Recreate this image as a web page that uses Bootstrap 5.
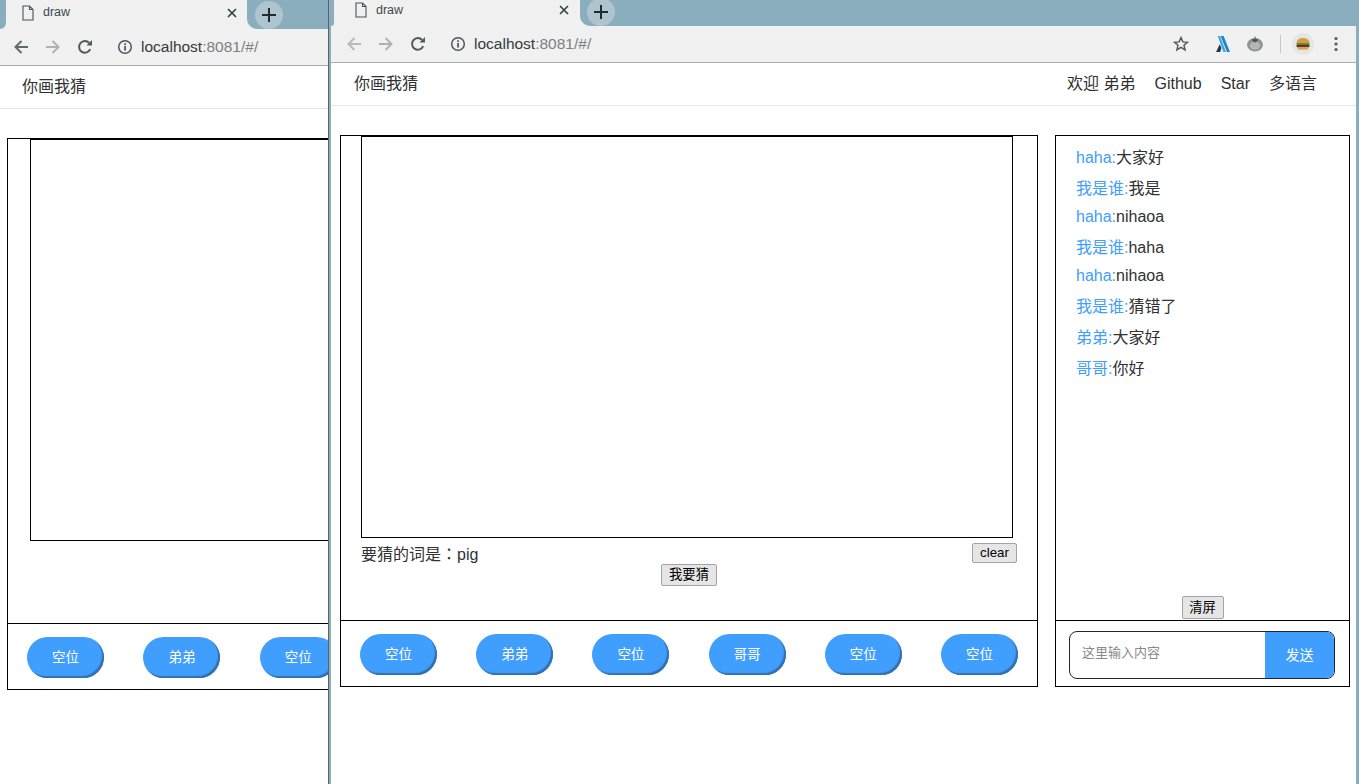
<!DOCTYPE html>
<html lang="zh">
<head>
<meta charset="UTF-8">
<title>draw</title>
<link href="https://cdn.jsdelivr.net/npm/bootstrap@5.3.3/dist/css/bootstrap.min.css" rel="stylesheet">
<style>
  body {
    width: 1359px;
    height: 784px;
    overflow: hidden;
    background: #8aaebd;
    font-family: "Liberation Sans", "Noto Sans CJK SC", sans-serif;
    color: #303133;
    font-size: 16px;
  }
  .win { background: #fff; overflow: hidden; flex: none; height: 784px; }
  .win-back { width: 329px; border-right: 1px solid #5a6468; }
  .win-front { width: 1025px; margin-left: 2px; }
  .chrome-top { background: repeating-conic-gradient(#f5f5f5 0 25%, #ececec 0 50%) 0 0 / 2px 2px; }
  .strip { height: 26px; }
  .win-back .strip { height: 29px; }
  .strip-edge { background: #8aaebd; width: 3px; border-bottom-right-radius: 6px; flex: none; }
  .win-back .strip-edge { width: 6px; border-bottom-right-radius: 10px; }
  .tab-item { width: 246px; flex: none; padding: 0 11px 6px 21px; font-size: 12.5px; color: #3c4a50; }
  .win-back .tab-item { width: 241px; padding: 0 10px 4px 16px; }
  .tab-label { margin-left: 1px; }
  .strip-rest { background: #8aaebd; flex: 1; border-bottom-left-radius: 10px; padding-left: 7px; }
  .win-back .strip-rest { padding-left: 8px; }
  .new-tab {
    width: 28px;
    height: 28px;
    margin-top: -2px;
    border-radius: 50%;
    background: #aec4ce;
    color: #1f2d33;
  }
  .win-back .new-tab { margin-top: 1px; }
  .tool-row { height: 37px; padding-left: 7px; padding-right: 18px; border-bottom: 1px solid #a9abac; }
  .win-back .tool-row { padding-left: 5px; }
  .tool-btn { width: 32px; flex: none; text-align: center; line-height: 0; }
  .url-info { margin-left: 16px; margin-right: 8px; line-height: 0; }
  .url-text { font-size: 15.5px; color: #7b8184; }
  .url-text b { font-weight: 400; color: #333b3f; }
  .ext-line { width: 1px; height: 18px; background: #c6c8c9; margin: 0 11px 0 17px; }
  .ext-aug { margin-left: 26px; }
  .ext-tomato { margin-left: 16px; }
  .ext-dots { margin-left: 20px; }
  .top-nav {
    height: 43px;
    padding: 0 39px 0 23px;
    border-bottom: 1px solid #e6e6e6;
  }
  .win-back .top-nav { padding-left: 22px; }
  .top-nav .navbar-brand { font-size: 16px; color: #303133; padding: 0; margin: 0; }
  .top-nav .nav-link { font-size: 16px; color: #303133; padding: 0; }
  .nav-gap { gap: 19px; }
  .stage { padding: 29px 6px 0 9px; gap: 17px; }
  .win-back .stage { padding-left: 7px; }
  .game-box { width: 698px; flex: none; border: 1px solid #000; }
  .chat-box { width: 295px; flex: none; border: 1px solid #000; }
  .game-top { height: 484px; padding-left: 20px; padding-right: 20px; }
  .win-back .game-top { padding-left: 22px; }
  .draw-area { width: 652px; height: 402px; border: 1px solid #000; background: #fff; }
  .word-row { padding-top: 5px; height: 26px; }
  .word-text { margin-top: -2px; }
  .full-colon { font-family: "Noto Sans CJK TC", sans-serif; }
  .plain-btn {
    font-family: "Liberation Sans", "Noto Sans CJK SC", sans-serif;
    font-size: 13.3px;
    line-height: 16px;
    color: #000;
    padding: 0;
    border: 1px solid #a3a3a3;
    border-radius: 2px;
    background: repeating-conic-gradient(#ececec 0 25%, #dfdfdf 0 50%) 0 0 / 2px 2px;
  }
  .guess-btn { height: 22px; width: 56px; }
  .clear-btn { height: 20px; width: 45px; }
  .wipe-btn { height: 23px; width: 42px; margin-bottom: 1px; }
  .seat-row { height: 66px; padding: 13px 19px 0 19px; border-top: 1px solid #000; }
  .win-back .seat-row { gap: 39.4px; }
  .seat-btn {
    width: 77px;
    height: 41px;
    border: 0;
    border-radius: 21px;
    background: #409eff;
    color: #fff;
    font-size: 13.5px;
    padding: 2px 0 0 0;
    box-shadow: inset -2px -2px 1px #3371ad;
    flex: none;
  }
  .chat-list { height: 484px; padding: 10px 20px 0 20px; }
  .chat-line { line-height: 24px; margin-bottom: 7px; font-size: 16px; }
  .chat-tight { margin-bottom: 4px; }
  .chat-name { color: #409eff; }
  .send-row { height: 66px; padding: 10px 14px 0 13px; border-top: 1px solid #000; }
  .send-group { height: 48px; border: 1px solid #22272b; border-radius: 8px; overflow: hidden; }
  .send-input {
    flex: 1;
    min-width: 0;
    border: 0;
    outline: 0;
    padding: 0 12px;
    font-size: 13px;
    font-family: "Liberation Sans", "Noto Sans CJK SC", sans-serif;
    margin-top: -4px;
    background: transparent;
  }
  .send-input::placeholder { color: #8a8a8a; opacity: 1; }
  .send-btn {
    width: 69px;
    flex: none;
    border: 0;
    background: #409eff;
    color: #fff;
    font-size: 14px;
    padding: 0;
  }
</style>
</head>
<body class="d-flex">

<svg width="0" height="0" class="d-none">
  <symbol id="ic-file" viewBox="0 0 12 16"><path d="M1 1h6.5L11 4.5V15H1zM7.5 1v3.5H11" fill="none" stroke="#4a5358" stroke-width="1.1"/></symbol>
  <symbol id="ic-close" viewBox="0 0 10 10"><path d="M1 1l8 8M9 1l-8 8" fill="none" stroke="#2f3f46" stroke-width="1.6"/></symbol>
  <symbol id="ic-plus" viewBox="0 0 14 14"><path d="M7 0v14M0 7h14" fill="none" stroke="currentColor" stroke-width="2"/></symbol>
  <symbol id="ic-back" viewBox="0 0 16 16"><path d="M15 8H2.5M8.5 2L2.5 8l6 6" fill="none" stroke="currentColor" stroke-width="2"/></symbol>
  <symbol id="ic-fwd" viewBox="0 0 16 16"><path d="M1 8h12.5M7.5 2l6 6-6 6" fill="none" stroke="currentColor" stroke-width="2"/></symbol>
  <symbol id="ic-reload" viewBox="0 0 16 16"><path d="M13.2 10.2A5.8 5.8 0 1 1 12.2 4" fill="none" stroke="currentColor" stroke-width="2"/><path d="M9.5 6.5H15V1z" fill="currentColor"/></symbol>
  <symbol id="ic-info" viewBox="0 0 16 16"><circle cx="8" cy="8" r="6.3" fill="none" stroke="#4d5559" stroke-width="1.5"/><rect x="7.2" y="7" width="1.7" height="4.6" fill="#4d5559"/><rect x="7.2" y="4.3" width="1.7" height="1.7" fill="#4d5559"/></symbol>
  <symbol id="ic-star" viewBox="0 0 16 16"><path d="M8 1.6l1.9 4.3 4.6.4-3.5 3 1.1 4.6L8 11.4l-4.1 2.5L5 9.3l-3.5-3 4.6-.4z" fill="none" stroke="#515a5e" stroke-width="1.5"/></symbol>
  <symbol id="ic-aug" viewBox="0 0 16 16"><path d="M5.6 0h3l6.4 16h-3z" fill="#1d87c9"/><path d="M2.8 0h2.2l6 16H8.4z" fill="#3aa7de"/><path d="M4.8 8.2L6.4 12 5.2 16H1z" fill="#1c3550"/></symbol>
  <symbol id="ic-tomato" viewBox="0 0 16 16"><ellipse cx="8" cy="8.8" rx="8" ry="6.8" fill="#8f9394"/><ellipse cx="8" cy="9.6" rx="5.2" ry="4.2" fill="#b3b6b7"/><path d="M8 .6v3.6M5 3.8h6L8 6.2z" stroke="#4f5355" fill="#4f5355" stroke-width="1"/></symbol>
  <symbol id="ic-burger" viewBox="0 0 24 24"><circle cx="12" cy="12" r="12" fill="#e4e6e6"/><path d="M5 11c0-3.5 3-5.5 7-5.5s7 2 7 5.5z" fill="#d99a45"/><rect x="5" y="11" width="14" height="2" fill="#5f7f2e"/><rect x="5" y="13" width="14" height="2.2" fill="#5a2f1c"/><path d="M5.5 15.2h13c0 2-1.5 3-3 3h-7c-1.5 0-3-1-3-3z" fill="#dca552"/></symbol>
  <symbol id="ic-dots" viewBox="0 0 4 16"><circle cx="2" cy="2.5" r="1.6" fill="#52595d"/><circle cx="2" cy="8" r="1.6" fill="#52595d"/><circle cx="2" cy="13.5" r="1.6" fill="#52595d"/></symbol>
</svg>

<!-- fenetre de derriere, coupee par celle de devant -->
<div class="win win-back">
  <div class="chrome-top">
    <div class="strip d-flex">
      <div class="strip-edge"></div>
      <div class="tab-item d-flex align-items-center">
        <svg width="12" height="16" class="me-2"><use href="#ic-file"/></svg>
        <span class="tab-label flex-grow-1">draw</span>
        <svg width="10" height="10"><use href="#ic-close"/></svg>
      </div>
      <div class="strip-rest">
        <div class="new-tab d-flex align-items-center justify-content-center"><svg width="14" height="14"><use href="#ic-plus"/></svg></div>
      </div>
    </div>
    <div class="tool-row d-flex align-items-center">
      <span class="tool-btn"><svg width="16" height="16" style="color:#5f6b70"><use href="#ic-back"/></svg></span>
      <span class="tool-btn"><svg width="16" height="16" style="color:#abb3b6"><use href="#ic-fwd"/></svg></span>
      <span class="tool-btn"><svg width="16" height="16" style="color:#4d5a5f"><use href="#ic-reload"/></svg></span>
      <span class="url-info"><svg width="16" height="16"><use href="#ic-info"/></svg></span>
      <span class="url-text"><b>localhost</b>:8081/#/</span>
    </div>
  </div>
  <nav class="navbar top-nav">
    <a class="navbar-brand" href="#">你画我猜</a>
  </nav>
  <div class="stage d-flex">
    <div class="game-box">
      <div class="game-top"><div class="draw-area"></div></div>
      <div class="seat-row d-flex">
        <button class="seat-btn">空位</button>
        <button class="seat-btn">弟弟</button>
        <button class="seat-btn">空位</button>
      </div>
    </div>
  </div>
</div>

<!-- fenetre principale -->
<div class="win win-front">
  <div class="chrome-top">
    <div class="strip d-flex">
      <div class="strip-edge"></div>
      <div class="tab-item d-flex align-items-center">
        <svg width="12" height="16" class="me-2"><use href="#ic-file"/></svg>
        <span class="tab-label flex-grow-1">draw</span>
        <svg width="10" height="10"><use href="#ic-close"/></svg>
      </div>
      <div class="strip-rest">
        <div class="new-tab d-flex align-items-center justify-content-center"><svg width="14" height="14"><use href="#ic-plus"/></svg></div>
      </div>
    </div>
    <div class="tool-row d-flex align-items-center">
      <span class="tool-btn"><svg width="16" height="16" style="color:#b4babd"><use href="#ic-back"/></svg></span>
      <span class="tool-btn"><svg width="16" height="16" style="color:#abb3b6"><use href="#ic-fwd"/></svg></span>
      <span class="tool-btn"><svg width="16" height="16" style="color:#4d5a5f"><use href="#ic-reload"/></svg></span>
      <span class="url-info"><svg width="16" height="16"><use href="#ic-info"/></svg></span>
      <span class="url-text flex-grow-1"><b>localhost</b>:8081/#/</span>
      <svg width="16" height="16"><use href="#ic-star"/></svg>
      <svg width="16" height="16" class="ext-aug"><use href="#ic-aug"/></svg>
      <svg width="16" height="16" class="ext-tomato"><use href="#ic-tomato"/></svg>
      <span class="ext-line"></span>
      <svg width="22" height="22"><use href="#ic-burger"/></svg>
      <svg width="4" height="16" class="ext-dots"><use href="#ic-dots"/></svg>
    </div>
  </div>
  <nav class="navbar top-nav">
    <a class="navbar-brand" href="#">你画我猜</a>
    <div class="d-flex nav-gap">
      <a class="nav-link" href="#">欢迎 弟弟</a>
      <a class="nav-link" href="#">Github</a>
      <a class="nav-link" href="#">Star</a>
      <a class="nav-link" href="#">多语言</a>
    </div>
  </nav>
  <div class="stage d-flex">
    <div class="game-box">
      <div class="game-top">
        <div class="draw-area"></div>
        <div class="word-row d-flex justify-content-between align-items-start">
          <span class="word-text">要猜的词是<span class="full-colon" lang="zh-TW">：</span>pig</span>
          <button class="plain-btn clear-btn">clear</button>
        </div>
        <div class="text-center lh-1"><button class="plain-btn guess-btn">我要猜</button></div>
      </div>
      <div class="seat-row d-flex justify-content-between">
        <button class="seat-btn">空位</button>
        <button class="seat-btn">弟弟</button>
        <button class="seat-btn">空位</button>
        <button class="seat-btn">哥哥</button>
        <button class="seat-btn">空位</button>
        <button class="seat-btn">空位</button>
      </div>
    </div>
    <div class="chat-box">
      <div class="chat-list d-flex flex-column">
        <div class="chat-line"><span class="chat-name">haha:</span>大家好</div>
        <div class="chat-line chat-tight"><span class="chat-name">我是谁:</span>我是</div>
        <div class="chat-line"><span class="chat-name">haha:</span>nihaoa</div>
        <div class="chat-line chat-tight"><span class="chat-name">我是谁:</span>haha</div>
        <div class="chat-line"><span class="chat-name">haha:</span>nihaoa</div>
        <div class="chat-line"><span class="chat-name">我是谁:</span>猜错了</div>
        <div class="chat-line"><span class="chat-name">弟弟:</span>大家好</div>
        <div class="chat-line"><span class="chat-name">哥哥:</span>你好</div>
        <div class="mt-auto text-center lh-1"><button class="plain-btn wipe-btn">清屏</button></div>
      </div>
      <div class="send-row">
        <div class="send-group d-flex">
          <input class="send-input" type="text" placeholder="这里输入内容">
          <button class="send-btn">发送</button>
        </div>
      </div>
    </div>
  </div>
</div>

</body>
</html>
